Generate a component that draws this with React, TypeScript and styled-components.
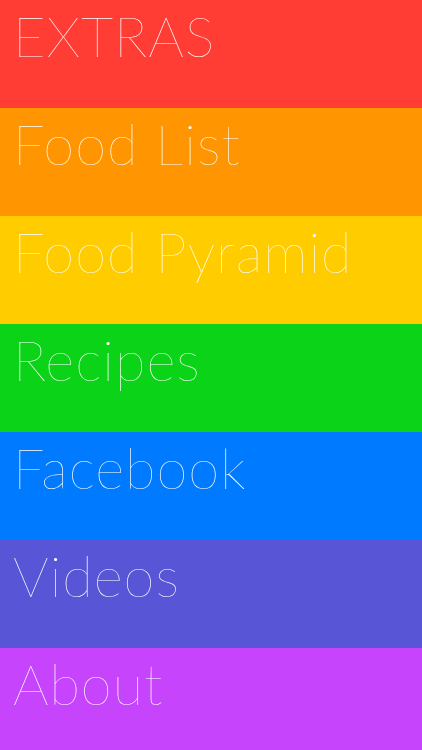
import React from "react";
import styled, { createGlobalStyle } from "styled-components";

const Global = createGlobalStyle`
  html, body { margin: 0; padding: 0; height: 100%; overflow: hidden; }
  body { font-family: "Lato", "Inter", sans-serif; }
`;

const Menu = styled.nav`
  display: flex;
  flex-direction: column;
  width: 422px;
  height: 750px;
  overflow: hidden;
`;

const Band = styled.div<{ $bg: string }>`
  flex: 0 0 108px;
  box-sizing: border-box;
  background: ${(p) => p.$bg};
  padding: 4px 0 0 13px;
  color: #fff;
  font-family: "Lato", sans-serif;
  font-weight: 100;
  font-size: 56px;
  line-height: 64px;
  letter-spacing: 1px;
  white-space: nowrap;
  &:last-child { flex: 1 1 auto; }
`;

const items = [
  { label: "EXTRAS", bg: "#FF3D35" },
  { label: "Food List", bg: "#FF9500" },
  { label: "Food Pyramid", bg: "#FFCC00" },
  { label: "Recipes", bg: "#0BD318" },
  { label: "Facebook", bg: "#007AFF" },
  { label: "Videos", bg: "#5856D6" },
  { label: "About", bg: "#C644FC" },
];

export default function App() {
  return (
    <>
      <Global />
      <Menu>
        {items.map((it) => (
          <Band key={it.label} $bg={it.bg}>
            {it.label}
          </Band>
        ))}
      </Menu>
    </>
  );
}
